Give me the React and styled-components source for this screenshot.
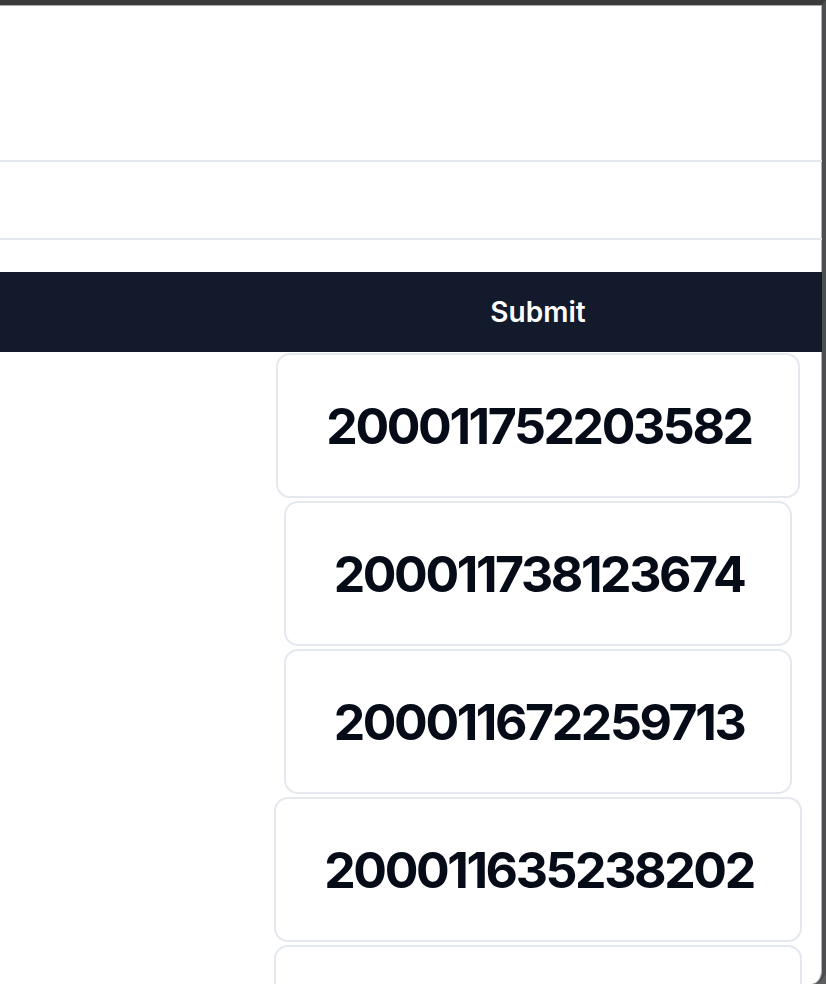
import React from 'react'
import styled, { createGlobalStyle } from 'styled-components'

const GlobalStyle = createGlobalStyle`
    html, body {
        margin: 0;
        padding: 0;
        background: #5c5f5f;
    }

    body {
        font-family: Inter, "Noto Sans", sans-serif;
    }
`

const Window = styled.div`
    width: 826px;
    height: 984px;
    box-sizing: border-box;
    border-top: 5px solid #3a3a3a;
    border-right: 4px solid #4b4f4f;
    border-bottom-right-radius: 14px;
    background: #fff;
    overflow: hidden;
    box-shadow: inset 0 1px 0 #a9a9a9, inset -1px 0 0 #b4b4b4;
`

const Page = styled.div`
    width: 1400px;
    margin-left: -162px;
    display: flex;
    flex-direction: column;
`

const FormRow = styled.div`
    height: ${props => props.height}px;
    box-sizing: border-box;
    border-bottom: 2px solid #e3e7ee;
`

const SubmitButton = styled.button`
    margin-top: 32px;
    height: 80px;
    border: none;
    background: #131a2b;
    color: #fff;
    font-family: Inter, "Noto Sans", sans-serif;
    font-size: 28px;
    font-weight: 600;
    cursor: pointer;
`

const CardList = styled.div`
    margin-top: 1px;
    display: flex;
    flex-direction: column;
    align-items: center;
    gap: 3px;
`

const Card = styled.div`
    height: 145px;
    box-sizing: border-box;
    padding: 0 46px 0 48px;
    display: flex;
    align-items: center;
    border: 2px solid #e4e8ef;
    border-radius: 14px;
    background: #fff;
    color: #060b18;
    font-size: 50px;
    font-weight: 700;
    letter-spacing: -2.4px;
`

const ids = [
    '200011752203582',
    '200011738123674',
    '200011672259713',
    '200011635238202',
    '200011598203826',
]

export default function App() {
    return (
        <>
            <GlobalStyle />
            <Window>
                <Page>
                    <FormRow height={157} />
                    <FormRow height={78} />
                    <SubmitButton>Submit</SubmitButton>
                    <CardList>
                        {ids.map(id => (
                            <Card key={id}>{id}</Card>
                        ))}
                    </CardList>
                </Page>
            </Window>
        </>
    )
}
